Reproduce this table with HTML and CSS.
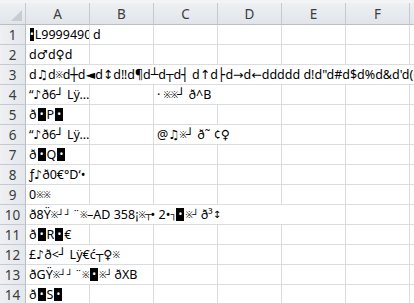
FILE: index.html
```html
<!DOCTYPE html>
<html>
<head>
<meta charset="utf-8">
<link rel="stylesheet" href="styles.css">
</head>
<body>
<div class="sheet">
  <div class="strip"></div>
  <div class="row head">
    <div class="corner"><span class="tri"></span></div>
    <div class="ch">A</div><div class="ch">B</div><div class="ch">C</div><div class="ch">D</div><div class="ch">E</div><div class="ch">F</div><div class="ch g"></div>
  </div>
  <div class="row"><div class="rh">1</div><div class="c"><span class="inv">•</span>L9999490</div><div class="c">d</div><div class="c"></div><div class="c"></div><div class="c"></div><div class="c"></div><div class="c g"></div></div>
  <div class="row"><div class="rh">2</div><div class="c">d♂d♀d</div><div class="c"></div><div class="c"></div><div class="c"></div><div class="c"></div><div class="c"></div><div class="c g"></div></div>
  <div class="row"><div class="rh">3</div><div class="c s7">d♫d<span class="x">※</span>d┼d◄d↕d‼d¶d┴d┬d┤ d↑d├d→d←ddddd d!d"d#d$d%d&amp;d'd(d)</div></div>
  <div class="row"><div class="rh">4</div><div class="c">“♪ð6┘ Lÿ…‧ᐧ</div><div class="c"></div><div class="c s2">· <span class="x">※※</span>┘ ð^B</div><div class="c"></div><div class="c"></div><div class="c g"></div></div>
  <div class="row"><div class="rh">5</div><div class="c">ð<span class="inv">•</span>P<span class="inv">•</span></div><div class="c"></div><div class="c"></div><div class="c"></div><div class="c"></div><div class="c"></div><div class="c g"></div></div>
  <div class="row"><div class="rh">6</div><div class="c">“♪ð6┘ Lÿ…‧ᐧ</div><div class="c"></div><div class="c s2">@♫<span class="x">※</span>┘ ð˜ ¢♀</div><div class="c"></div><div class="c"></div><div class="c g"></div></div>
  <div class="row"><div class="rh">7</div><div class="c">ð<span class="inv">•</span>Q<span class="inv">•</span></div><div class="c"></div><div class="c"></div><div class="c"></div><div class="c"></div><div class="c"></div><div class="c g"></div></div>
  <div class="row"><div class="rh">8</div><div class="c">ƒ♪ð0€°D‘•</div><div class="c"></div><div class="c"></div><div class="c"></div><div class="c"></div><div class="c"></div><div class="c g"></div></div>
  <div class="row"><div class="rh">9</div><div class="c">0<span class="x">※※</span></div><div class="c"></div><div class="c"></div><div class="c"></div><div class="c"></div><div class="c"></div><div class="c g"></div></div>
  <div class="row"><div class="rh">10</div><div class="c s5">ð8Ÿ<span class="x">※</span><span class="b">┘ ┘</span> ¨<span class="x">※</span>–AD 358¡<span class="x">※</span><span class="b">┬</span>• 2•<span class="b">┐</span><span class="inv">•</span><span class="x">※</span><span class="b">┘</span> ð³<span class="b">↕</span></div><div class="c"></div><div class="c g"></div></div>
  <div class="row"><div class="rh">11</div><div class="c">ð<span class="inv">•</span>R<span class="inv">•</span>€</div><div class="c"></div><div class="c"></div><div class="c"></div><div class="c"></div><div class="c"></div><div class="c g"></div></div>
  <div class="row"><div class="rh">12</div><div class="c s2">£♪ð&lt;┘ Lÿ€ć┬♀<span class="x">※</span></div><div class="c"></div><div class="c"></div><div class="c"></div><div class="c"></div><div class="c g"></div></div>
  <div class="row"><div class="rh">13</div><div class="c s2">ðGŸ<span class="x">※</span><span class="b">┘ ┘</span> ¨<span class="x">※</span> <span class="inv">•</span><span class="x">※</span><span class="b">┘</span> ðXB</div><div class="c"></div><div class="c"></div><div class="c"></div><div class="c"></div><div class="c g"></div></div>
  <div class="row"><div class="rh">14</div><div class="c">ð<span class="inv">•</span>S<span class="inv">•</span></div><div class="c"></div><div class="c"></div><div class="c"></div><div class="c"></div><div class="c"></div><div class="c g"></div></div>
</div>
</body>
</html>
```
FILE: styles.css
```css
html, body {
  margin: 0;
  padding: 0;
  background: #ffffff;
  overflow: hidden;
}
.sheet {
  width: 414px;
  height: 303px;
  overflow: hidden;
  font-family: "Noto Sans", "DejaVu Sans", sans-serif;
  font-size: 12.5px;
  color: #000;
}
.strip {
  height: 3px;
  background: #f3f4f6;
}
.row {
  display: grid;
  grid-template-columns: 26px repeat(6, 64px) 20px;
  height: 20px;
}
.row.head {
  height: 22px;
}
.corner {
  background: linear-gradient(#eef0f3, #e1e5ea);
  border-right: 1px solid #c6cad0;
  border-bottom: 1px solid #b9bec5;
  box-sizing: border-box;
  position: relative;
}
.tri {
  position: absolute;
  right: 3px;
  bottom: 3px;
  width: 0;
  height: 0;
  border-left: 11px solid transparent;
  border-bottom: 11px solid #c8ccd2;
}
.ch {
  background: linear-gradient(#eef0f3, #e1e5ea);
  border-right: 1px solid #c6cad0;
  border-bottom: 1px solid #b9bec5;
  box-sizing: border-box;
  display: flex;
  align-items: center;
  justify-content: center;
  font-size: 13.5px;
  color: #3c3c3c;
}
.rh {
  background: linear-gradient(90deg, #eef0f3, #e4e7ec);
  border-right: 1px solid #b9bec5;
  border-bottom: 1px solid #c6cad0;
  box-sizing: border-box;
  display: flex;
  align-items: center;
  justify-content: center;
  font-size: 13.5px;
  color: #3c3c3c;
}
.c {
  border-right: 1px solid #dadcdf;
  border-bottom: 1px solid #dadcdf;
  box-sizing: border-box;
  white-space: pre;
  overflow: hidden;
  padding-left: 3px;
  line-height: 19px;
  display: flex;
  align-items: center;
}
.s2 { grid-column: span 2; }
.s5 { grid-column: span 5; }
.s7 { grid-column: span 7; border-right: none; }
.g { border-right: none; }
.x {
  font-size: 9px;
  letter-spacing: -0.5px;
}
.b {
  font-size: 10px;
  letter-spacing: -1px;
}
.inv {
  display: inline-block;
  background: #000;
  color: #fff;
  width: 8px;
  height: 13px;
  line-height: 13px;
  text-align: center;
  font-size: 10px;
  margin: 0 1px;
}
```
